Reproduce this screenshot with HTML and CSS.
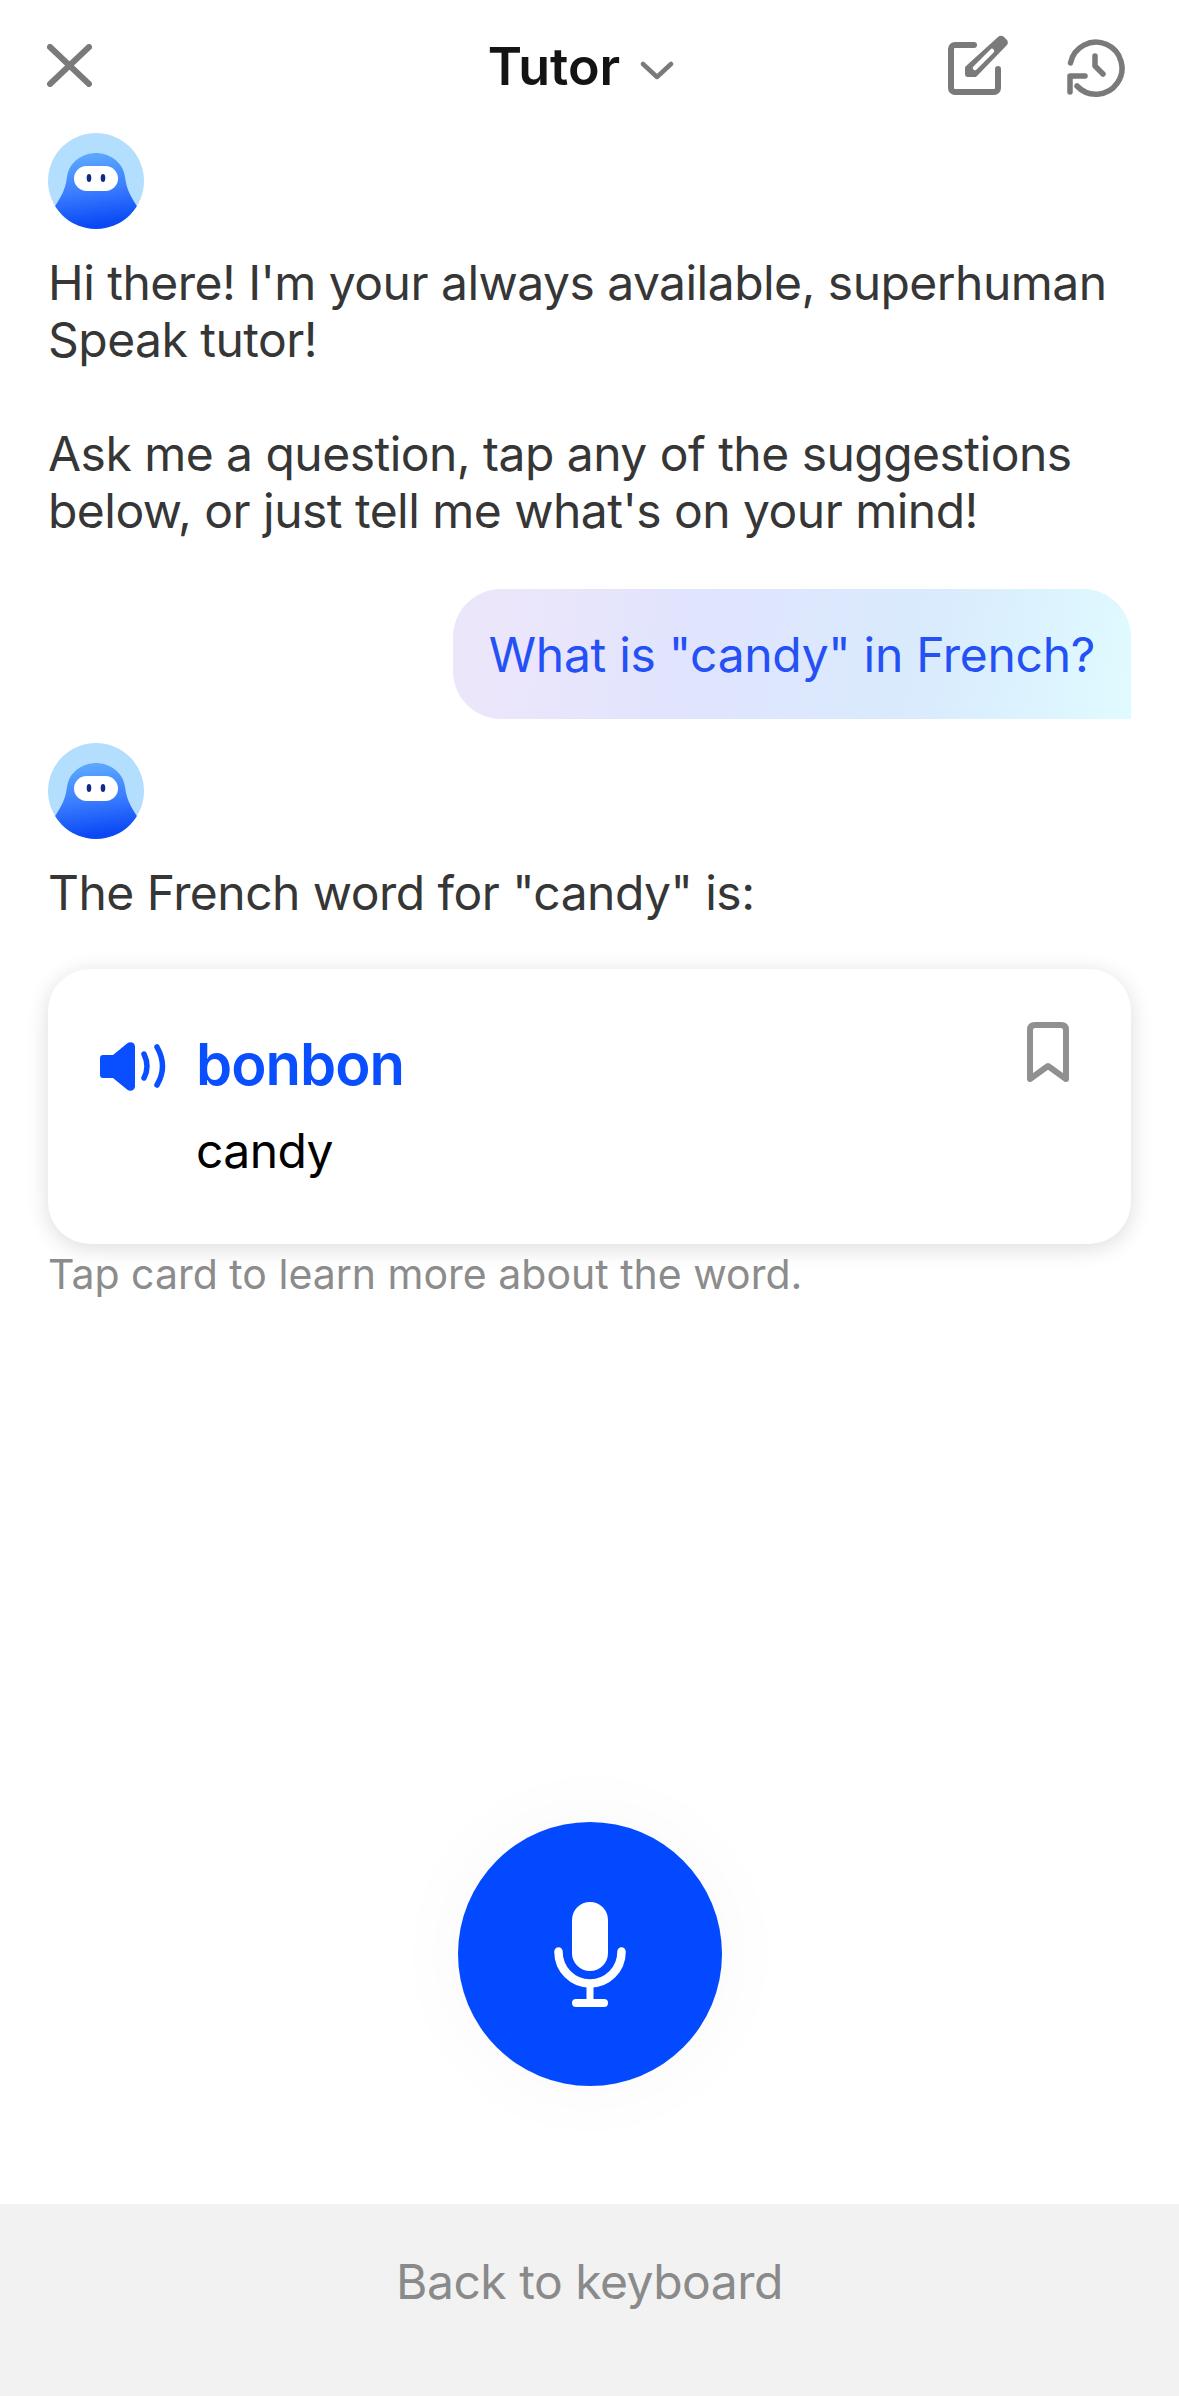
FILE: index.html
```html
<!DOCTYPE html>
<html lang="en">
<head>
<meta charset="UTF-8">
<meta name="viewport" content="width=device-width, initial-scale=1.0">
<title>Tutor</title>
<link rel="stylesheet" href="styles.css">
</head>
<body>

<svg class="defs" width="0" height="0">
  <defs>
    <linearGradient id="bodyGrad" x1="0" y1="0" x2="0.15" y2="1">
      <stop offset="0" stop-color="#62b0ff"/>
      <stop offset="0.55" stop-color="#3a7dff"/>
      <stop offset="1" stop-color="#0a48f5"/>
    </linearGradient>
    <clipPath id="avatarClip"><circle cx="48" cy="48" r="48"/></clipPath>
    <symbol id="avatar" viewBox="0 0 96 96">
      <circle cx="48" cy="48" r="48" fill="#b3defe"/>
      <path clip-path="url(#avatarClip)" fill="url(#bodyGrad)" d="M4 78C10 68 17 60 19 44C21 28 36 20 48 20C60 20 75 28 77 44C79 60 86 68 92 78V96H4Z"/>
      <rect x="26" y="33" width="44" height="25" rx="12.500" fill="#fff"/>
      <ellipse cx="41" cy="45" rx="2.300" ry="4" fill="#12298c"/>
      <ellipse cx="55" cy="45" rx="2.300" ry="4" fill="#12298c"/>
    </symbol>
  </defs>
</svg>

<header class="topbar">
  <svg class="icon-close" viewBox="0 0 45 43" fill="none" stroke="#7a7a7a" stroke-width="6" stroke-linecap="round">
    <path d="M3 3L42 40M42 3L3 40"/>
  </svg>
  <div class="title">
    <span>Tutor</span>
    <svg class="icon-chevron" viewBox="0 0 34 19" fill="none" stroke="#7a7a7a" stroke-width="4.500" stroke-linecap="round" stroke-linejoin="round">
      <path d="M3 3L17 16L31 3"/>
    </svg>
  </div>
  <div class="actions">
    <svg class="icon-edit" viewBox="0 0 60 60" fill="none">
      <path d="M26 10H7a4 4 0 0 0-4 4V53a4 4 0 0 0 4 4H46a4 4 0 0 0 4-4V34" stroke="#7a7a7a" stroke-width="6" stroke-linecap="round"/>
      <path fill="#7a7a7a" d="M50 2a4 4 0 0 1 6 0l2.500 2.500a4 4 0 0 1 0 6L29 41a3 3 0 0 1-2 1H20a3 3 0 0 1-3-3V33a3 3 0 0 1 1-2Z"/>
      <path d="M27 33L44 16" stroke="#fff" stroke-width="4.500" stroke-linecap="round"/>
    </svg>
    <svg class="icon-history" viewBox="0 0 58 58" fill="none" stroke="#7a7a7a" stroke-width="5.500" stroke-linecap="round" stroke-linejoin="round">
      <path d="M3.500 24A26 26 0 1 1 10 47"/>
      <path d="M3 53V37H18"/>
      <path d="M28 17V27L36 35"/>
    </svg>
  </div>
</header>

<main class="chat">
  <svg class="avatar"><use href="#avatar"/></svg>
  <p class="msg">Hi there! I'm your always available, superhuman<br>Speak tutor!<br><br>Ask me a question, tap any of the suggestions<br>below, or just tell me what's on your mind!</p>

  <div class="bubble">What is "candy" in French?</div>

  <svg class="avatar"><use href="#avatar"/></svg>
  <p class="msg">The French word for "candy" is:</p>

  <div class="card">
    <svg class="icon-speaker" viewBox="0 0 66 49">
      <path fill="#0a4fff" d="M3 13H13L27 1.500c3-2.500 8-1 8 3V44.500c0 4-5 5.500-8 3L13 36H3a3 3 0 0 1-3-3V16a3 3 0 0 1 3-3Z"/>
      <path d="M44 12Q50 24.500 44 36M57 5Q68 24.500 57 43" fill="none" stroke="#0a4fff" stroke-width="5.500" stroke-linecap="round"/>
    </svg>
    <div class="word">
      <div class="word-fr">bonbon</div>
      <div class="word-en">candy</div>
    </div>
    <svg class="icon-bookmark" viewBox="0 0 42 60" fill="none" stroke="#909090" stroke-width="6" stroke-linejoin="round">
      <path d="M3 57V8q0-5 5-5H34q5 0 5 5V57L21 44Z"/>
    </svg>
  </div>
  <p class="hint">Tap card to learn more about the word.</p>

  <div class="mic-row">
    <div class="mic">
      <svg class="icon-mic" viewBox="0 0 72 105" fill="none" stroke="#fff" stroke-linecap="round">
        <rect x="18" y="0" width="36" height="69" rx="18" fill="#fff" stroke="none"/>
        <path d="M4.500 49.500V50a31.500 31.500 0 0 0 63 0v-.5" stroke-width="8.500"/>
        <path d="M36 82V100" stroke-width="7"/>
        <path d="M22 101H50" stroke-width="8"/>
      </svg>
    </div>
  </div>
</main>

<footer class="keyboard">Back to keyboard</footer>

</body>
</html>
```

FILE: styles.css
```css
body {
  margin: 0;
  height: 2396px;
  display: flex;
  flex-direction: column;
  font-family: Inter, "Noto Sans", sans-serif;
  background-color: #fff;
  color: #363636;
  overflow: hidden;
}

.defs {
  position: absolute;
}

.topbar {
  display: grid;
  grid-template-columns: 1fr auto 1fr;
  align-items: center;
  height: 133px;
  padding: 0 54px 0 47px;
  flex-shrink: 0;
}

.icon-close {
  width: 45px;
  height: 43px;
  margin-top: -2px;
}

.title {
  display: flex;
  align-items: center;
  gap: 20px;
  margin-right: 10px;
  font-size: 52px;
  font-weight: 600;
  color: #141414;
}

.icon-chevron {
  width: 34px;
  height: 19px;
  margin-top: 8px;
}

.actions {
  display: flex;
  justify-content: flex-end;
  align-items: center;
  gap: 59px;
}

.icon-edit {
  width: 60px;
  height: 60px;
  margin-top: -3px;
}

.icon-history {
  width: 58px;
  height: 58px;
  margin-top: 2px;
}

.chat {
  flex: 1;
  display: flex;
  flex-direction: column;
  padding: 0 48px;
}

.avatar {
  width: 96px;
  height: 96px;
  flex-shrink: 0;
}

.msg {
  margin: 25px 0 0;
  font-size: 48px;
  line-height: 57px;
  letter-spacing: -0.53px;
  white-space: nowrap;
}

.bubble {
  align-self: flex-end;
  margin: 50px 0 24px;
  padding: 0 36px;
  height: 130px;
  display: flex;
  align-items: center;
  font-size: 48px;
  letter-spacing: -0.3px;
  color: #2450f5;
  border-radius: 48px 48px 0 48px;
  background: linear-gradient(100deg, #ece6fb 8%, #e0e4fd 35%, #d9ebfd 70%, #e0fbff 100%);
}

.card {
  display: flex;
  align-items: flex-start;
  height: 275px;
  box-sizing: border-box;
  margin-top: 48px;
  padding: 53px 62px 0 52px;
  background-color: #fff;
  border-radius: 42px;
  box-shadow: 0 4px 22px rgba(0, 0, 0, 0.14);
}

.icon-speaker {
  width: 66px;
  height: 49px;
  margin-top: 20px;
  margin-right: 30px;
  flex-shrink: 0;
}

.word {
  flex: 1;
  margin-top: 7px;
}

.word-fr {
  font-size: 58px;
  line-height: 70px;
  font-weight: 600;
  letter-spacing: -1px;
  color: #0a4fff;
}

.word-en {
  margin-top: 24px;
  font-size: 48px;
  line-height: 56px;
  letter-spacing: -0.6px;
  color: #000;
}

.icon-bookmark {
  width: 42px;
  height: 60px;
  flex-shrink: 0;
}

.hint {
  margin: 5px 0 0;
  font-size: 41px;
  line-height: 50px;
  color: #8c8c8c;
}

.mic-row {
  margin-top: auto;
  padding-bottom: 118px;
  display: flex;
  justify-content: center;
}

.mic {
  width: 264px;
  height: 264px;
  border-radius: 50%;
  background-color: #0349ff;
  box-shadow: 0 0 90px rgba(0, 0, 0, 0.03);
  display: flex;
  justify-content: center;
  align-items: center;
}

.icon-mic {
  width: 72px;
  height: 105px;
}

.keyboard {
  height: 192px;
  flex-shrink: 0;
  box-sizing: border-box;
  padding-top: 50px;
  line-height: 56px;
  text-align: center;
  font-size: 48px;
  letter-spacing: -0.5px;
  color: #8a8a8a;
  background-color: #f2f2f2;
}
```
